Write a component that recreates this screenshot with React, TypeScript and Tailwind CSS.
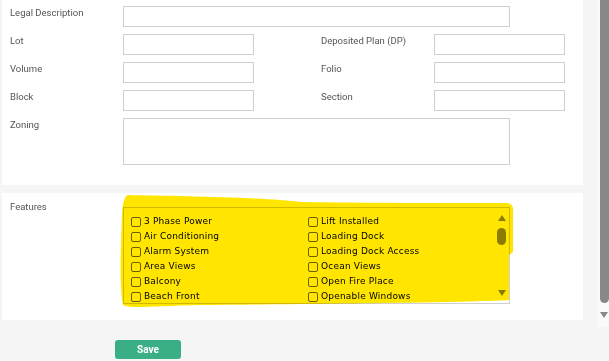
const left = ["3 Phase Power", "Air Conditioning", "Alarm System", "Area Views", "Balcony", "Beach Front"];
const right = ["Lift Installed", "Loading Dock", "Loading Dock Access", "Ocean Views", "Open Fire Place", "Openable Windows"];

function Label({ children, className = "" }: { children: React.ReactNode; className?: string }) {
  return (
    <div className={`pt-[1px] text-[9.5px] leading-[12px] text-[#555] ${className}`}>{children}</div>
  );
}

function Box({ className = "" }: { className?: string }) {
  return <div className={`h-[21px] border border-[#cfcfcf] bg-white ${className}`} />;
}

function Check({ text }: { text: string }) {
  return (
    <div className="flex items-center h-[15px]">
      <span className="w-[10px] h-[10px] rounded-[2px] border border-[#6b6b6b] bg-white" />
      <span
        className="ml-[3px] text-[9px] tracking-[0.2px] text-black"
        style={{ fontFamily: "'DejaVu Sans', Verdana, sans-serif" }}
      >
        {text}
      </span>
    </div>
  );
}

export default function App() {
  return (
    <div
      className="flex w-[609px] h-[361px] overflow-hidden bg-[#f5f5f5]"
      style={{ fontFamily: "Roboto, 'Liberation Sans', sans-serif" }}
    >
      <div className="w-[597px] pl-[2px]">
        {/* property details */}
        <div className="w-[581px] h-[185px] bg-white flex flex-col gap-[7px] pt-[6px]">
          <div className="flex">
            <Label className="w-[121px] pl-[8px]">Legal Description</Label>
            <Box className="w-[387px]" />
          </div>
          {[
            ["Lot", "Deposited Plan (DP)"],
            ["Volume", "Folio"],
            ["Block", "Section"],
          ].map(([a, b]) => (
            <div key={a} className="flex">
              <Label className="w-[121px] pl-[8px]">{a}</Label>
              <Box className="w-[131px]" />
              <Label className="w-[113px] pl-[67px] box-content">{b}</Label>
              <Box className="w-[131px]" />
            </div>
          ))}
          <div className="flex">
            <Label className="w-[121px] pl-[8px]">Zoning</Label>
            <div className="w-[387px] h-[47px] border border-[#cfcfcf] bg-white" />
          </div>
        </div>

        {/* features */}
        <div className="relative mt-[8px] w-[581px] h-[127px] bg-white flex pt-[7px]">
          <Label className="w-[121px] pl-[8px]">Features</Label>
          <div className="relative mt-[7px] w-[387px] h-[97px] border border-[#cfcfcf] flex pl-[7px] pt-[6px]">
            <div className="w-[177px]">
              {left.map((t) => (
                <Check key={t} text={t} />
              ))}
            </div>
            <div>
              {right.map((t) => (
                <Check key={t} text={t} />
              ))}
            </div>
            <div className="absolute right-[3px] top-[7px] bottom-[7px] w-[9px] flex flex-col items-center">
              <span className="w-0 h-0 border-l-[4px] border-r-[4px] border-b-[6px] border-l-transparent border-r-transparent border-b-[#8a8a8a]" />
              <span className="mt-[7px] w-[9px] h-[17px] rounded-full bg-[#8a8a8a]" />
              <span className="mt-auto w-0 h-0 border-l-[4px] border-r-[4px] border-t-[6px] border-l-transparent border-r-transparent border-t-[#8a8a8a]" />
            </div>
          </div>
          {/* highlighter mark */}
          <svg
            className="absolute left-0 top-0 mix-blend-multiply pointer-events-none"
            width="581"
            height="127"
            viewBox="0 0 581 127"
          >
            <path
              d="M126 2 C 170 3, 260 4, 300 9 C 360 10, 440 10, 505 10 Q 512 11, 511 18 L 511 59 L 507 62 L 507 107 C 450 110, 300 111, 200 112 C 150 113, 128 116, 121 112 C 117 90, 119 50, 120 20 C 121 8, 123 3, 126 2 Z"
              fill="#ffe500"
            />
          </svg>
        </div>

        <div className="mt-[16px] pl-[113px]">
          <button className="w-[66px] h-[19px] rounded-[3px] bg-[#3aaf86] text-white text-[10px] font-bold leading-[19px]">
            Save
          </button>
        </div>
      </div>

      {/* page scrollbar */}
      <div className="w-[12px] h-[327px] bg-[#fafafa] flex flex-col items-end">
        <div className="w-[9px] h-[303px] rounded-b-full bg-[#888]" />
        <span className="mt-[9px] mr-[1px] w-0 h-0 border-l-[4px] border-r-[4px] border-t-[6px] border-l-transparent border-r-transparent border-t-[#888]" />
      </div>
    </div>
  );
}
